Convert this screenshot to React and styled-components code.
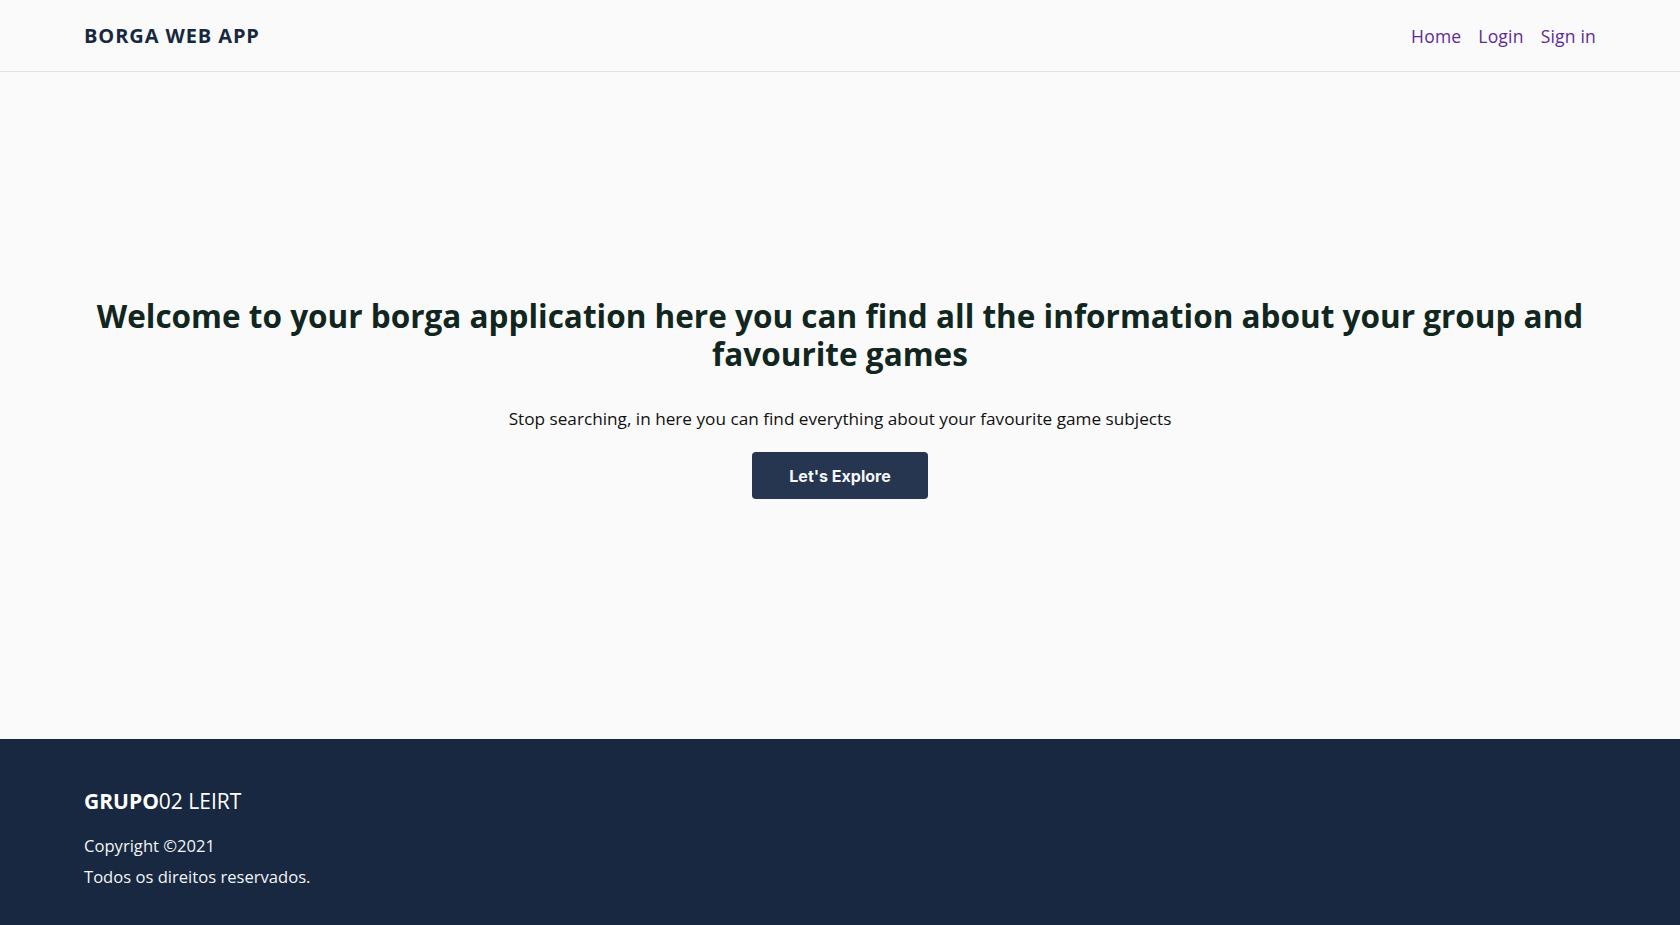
import React from 'react';
import styled, { createGlobalStyle } from 'styled-components';

const GlobalStyle = createGlobalStyle`
  html, body {
    margin: 0;
    padding: 0;
    background: #fafafa;
    font-family: "Open Sans", "Lato", sans-serif;
  }
  * { box-sizing: border-box; }
`;

const Page = styled.div`
  display: flex;
  flex-direction: column;
  min-height: 925px;
`;

const Header = styled.header`
  height: 72px;
  display: flex;
  align-items: center;
  justify-content: space-between;
  padding: 0 84px;
  border-bottom: 1px solid #e3e3e3;
  background: #fafafa;
`;

const Brand = styled.div`
  font-size: 20px;
  font-weight: 700;
  letter-spacing: 0.9px;
  color: #172840;
`;

const Nav = styled.nav`
  display: flex;
  gap: 17px;
`;

const NavLink = styled.a`
  color: #5b2c98;
  font-size: 17.5px;
  letter-spacing: 0.2px;
  text-decoration: none;
  cursor: pointer;
`;

const Hero = styled.main`
  flex: 1;
  display: flex;
  flex-direction: column;
  align-items: center;
  justify-content: center;
  padding: 0 84px 15px;
  text-align: center;
`;

const Title = styled.h1`
  margin: 0;
  font-size: 31.5px;
  line-height: 38px;
  font-weight: 700;
  color: #10261f;
`;

const Subtitle = styled.p`
  margin: 34px 0 0;
  font-size: 17.2px;
  line-height: 24px;
  color: #111;
`;

const Button = styled.button`
  margin-top: 21px;
  width: 176px;
  height: 47px;
  border: none;
  border-radius: 4px;
  background: #263550;
  color: #f4f6f8;
  font-family: "Inter", sans-serif;
  font-size: 16px;
  font-weight: 700;
  cursor: pointer;
`;

const Footer = styled.footer`
  height: 186px;
  background: #172840;
  color: #fff;
  padding: 48px 84px 0;
`;

const FooterBrand = styled.div`
  font-size: 21px;
  line-height: 28px;
  margin-bottom: 15px;
  b { font-weight: 700; }
`;

const FooterLine = styled.div`
  font-size: 16.6px;
  line-height: 31px;
  color: #f2f4f7;
`;

export default function App() {
  return (
    <>
      <GlobalStyle />
      <Page>
        <Header>
          <Brand>BORGA WEB APP</Brand>
          <Nav>
            <NavLink>Home</NavLink>
            <NavLink>Login</NavLink>
            <NavLink>Sign in</NavLink>
          </Nav>
        </Header>
        <Hero>
          <Title>
            Welcome to your borga application here you can find all the information about your group and favourite games
          </Title>
          <Subtitle>Stop searching, in here you can find everything about your favourite game subjects</Subtitle>
          <Button>Let's Explore</Button>
        </Hero>
        <Footer>
          <FooterBrand><b>GRUPO</b>02 LEIRT</FooterBrand>
          <FooterLine>Copyright ©2021</FooterLine>
          <FooterLine>Todos os direitos reservados.</FooterLine>
        </Footer>
      </Page>
    </>
  );
}
